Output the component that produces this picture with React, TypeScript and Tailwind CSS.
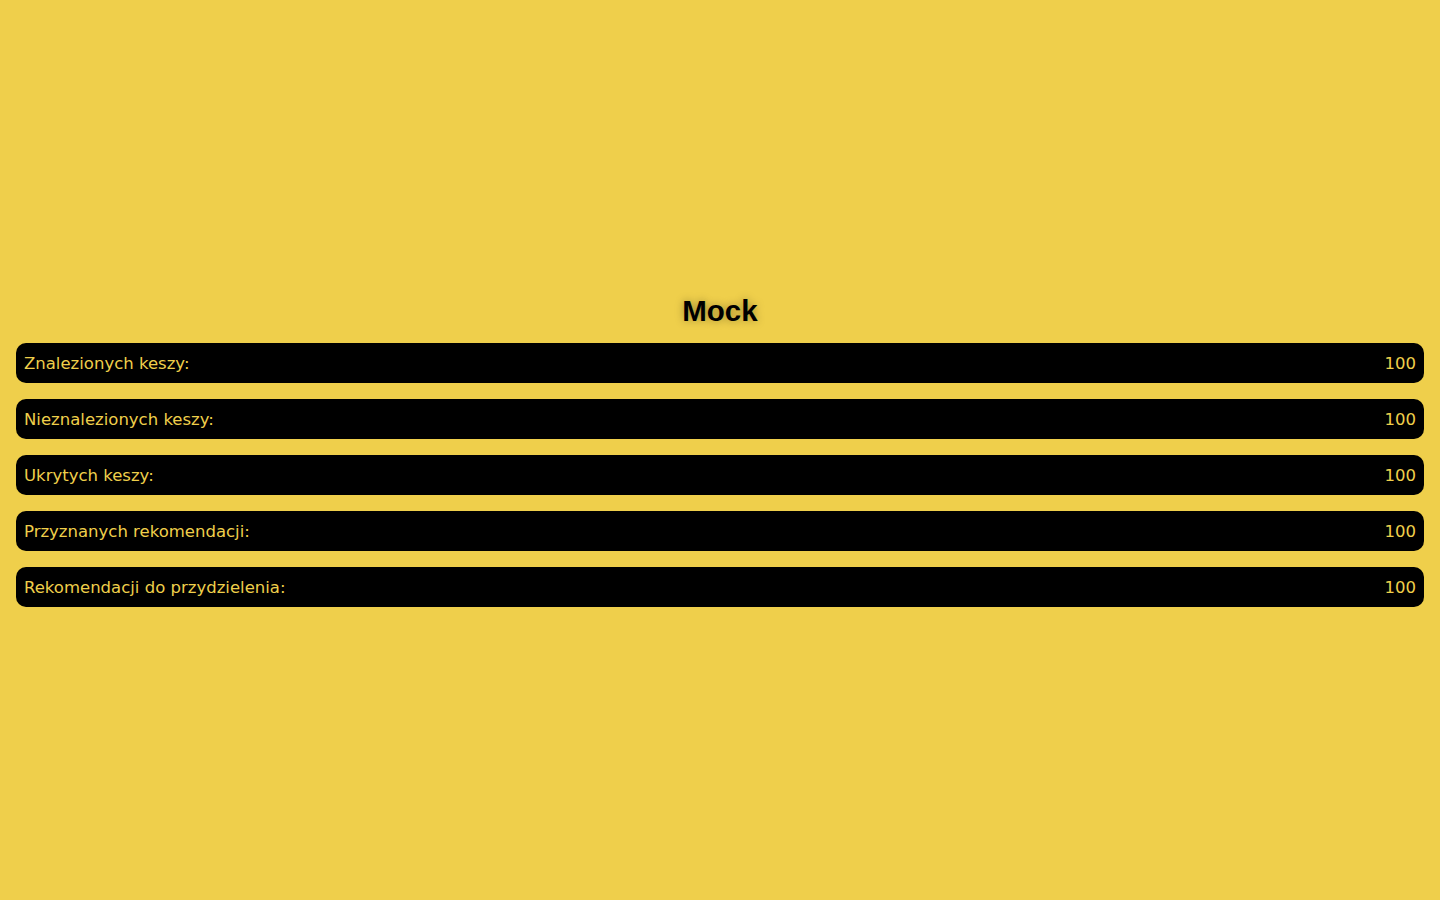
const stats = [
  { label: "Znalezionych keszy:", value: 100 },
  { label: "Nieznalezionych keszy:", value: 100 },
  { label: "Ukrytych keszy:", value: 100 },
  { label: "Przyznanych rekomendacji:", value: 100 },
  { label: "Rekomendacji do przydzielenia:", value: 100 },
];

export default function App() {
  return (
    <div className="flex min-h-screen flex-col justify-center bg-[#efcf4b] px-4">
      <h1
        className="mb-[16px] pt-[2px] text-center font-['Liberation_Sans',Arial,sans-serif] text-[29.5px] leading-[32px] font-bold text-black [text-shadow:0_0_8px_rgba(0,0,0,0.35)]"
      >
        Mock
      </h1>
      <div className="flex flex-col gap-4">
        {stats.map((s) => (
          <div
            key={s.label}
            className="flex h-10 items-center justify-between rounded-[10px] bg-black px-2 pt-[3px] font-['DejaVu_Sans',sans-serif] text-[16.5px] text-[#efcf4b]"
          >
            <span>{s.label}</span>
            <span>{s.value}</span>
          </div>
        ))}
      </div>
    </div>
  );
}
